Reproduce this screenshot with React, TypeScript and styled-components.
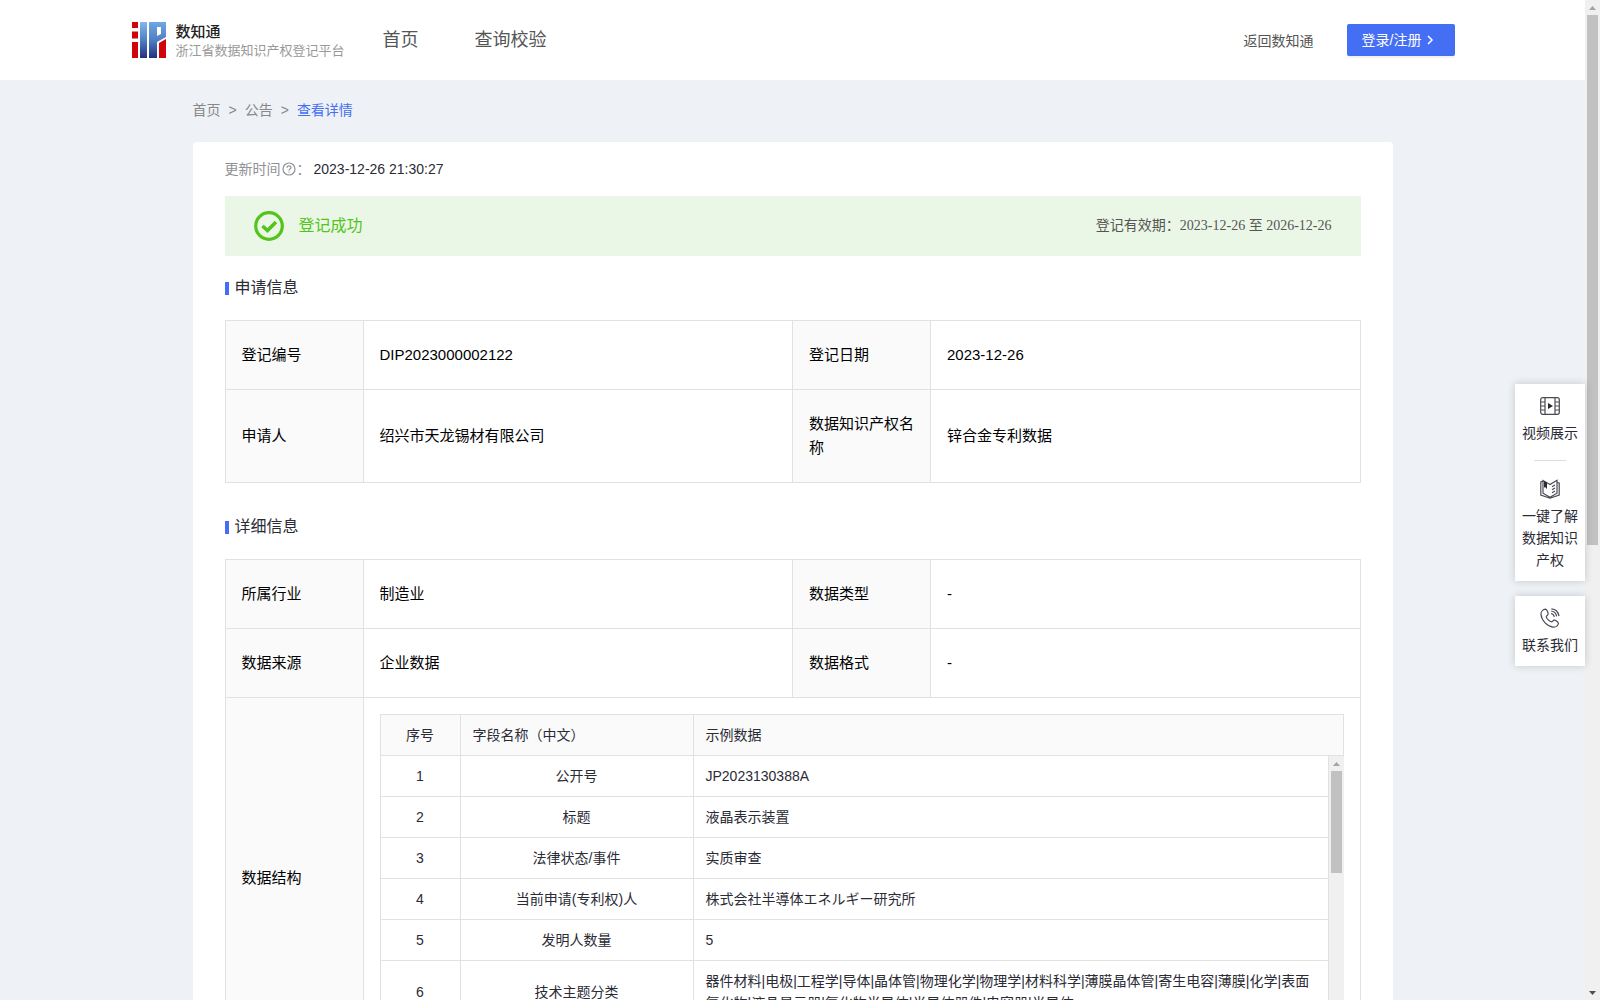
import React from "react";
import styled, { createGlobalStyle, css } from "styled-components";

const sans = `"Liberation Sans", "Noto Sans CJK SC", sans-serif`;
const cjk = `"Noto Sans CJK SC", "Liberation Sans", sans-serif`;
const line = "#e1e1e1";
const blue = "#446ef4";

const GlobalStyle = createGlobalStyle`
  * { box-sizing: border-box; }
  body { margin: 0; background: #eef2f6; font-family: ${sans}; font-size: 14px; color: #2b2b36; }
  a { color: inherit; text-decoration: none; }
  h1, h2, p { margin: 0; font-weight: 400; }
`;

const Page = styled.div`
  display: flex;
  height: 100vh;
  overflow: hidden;
  position: relative;
`;
const Content = styled.div`
  flex: 1;
  min-width: 0;
  overflow: hidden;
`;

/* scroll bars */
const Track = styled.div`
  display: flex;
  flex-direction: column;
  align-items: center;
  justify-content: space-between;
  flex: none;
  width: 15px;
  background: #f0f0f0;
`;
const ThumbArea = styled.div`
  flex: 1;
  width: 11px;
`;
const Thumb = styled.div<{ $size: string }>`
  height: ${(p) => p.$size};
  background: #c1c1c1;
`;
const ArrowBox = styled.svg`
  display: block;
  width: 15px;
  height: 15px;
`;
function Scrollbar({ size }: { size: string }) {
  return (
    <Track aria-hidden="true">
      <ArrowBox viewBox="0 0 15 15"><path d="M4 10h7L7.500 6z" fill="#a3a3a3" /></ArrowBox>
      <ThumbArea><Thumb $size={size} /></ThumbArea>
      <ArrowBox viewBox="0 0 15 15"><path d="M4 6h7l-3.500 4z" fill="#505050" /></ArrowBox>
    </Track>
  );
}

/* header */
const Header = styled.header`
  background: #fff;
`;
const HeaderInner = styled.div`
  display: flex;
  align-items: center;
  max-width: 1324px;
  height: 80px;
  margin: 0 auto;
`;
const Brand = styled.a`
  display: flex;
  align-items: center;
  gap: 10px;
`;
const BrandName = styled.strong`
  display: block;
  font: 500 15px/20px ${cjk};
  color: #222;
`;
const BrandSub = styled.span`
  display: block;
  font: 400 13px/18px ${cjk};
  color: #999;
`;
const Nav = styled.nav`
  display: flex;
  gap: 56px;
  margin-left: 38px;
  flex: 1;
  font-size: 18px;
  line-height: 24px;
  color: #555;
`;
const BackLink = styled.a`
  color: #555;
  margin-right: 33px;
`;
const LoginButton = styled.button`
  display: flex;
  align-items: center;
  gap: 5px;
  height: 32px;
  width: 108px;
  padding: 0 15px;
  border: 0;
  border-radius: 2px;
  background: ${blue};
  box-shadow: 0 2px 0 rgba(0, 0, 0, 0.05);
  color: #fff;
  font: 14px/20px ${sans};
`;

/* main card */
const Main = styled.main`
  max-width: 1200px;
  margin: 0 auto;
`;
const Breadcrumb = styled.nav`
  display: flex;
  gap: 8px;
  padding: 20px 0 22px;
  line-height: 20px;
  color: #888;
`;
const Current = styled.span`
  color: ${blue};
`;
const Card = styled.section`
  background: #fff;
  border-radius: 4px;
  padding: 16px 32px;
`;
const Updated = styled.p`
  display: flex;
  align-items: center;
  height: 22px;
  line-height: 22px;
`;
const UpdatedLabel = styled.span`
  display: flex;
  align-items: center;
  gap: 1px;
  margin-right: 3px;
  color: #909096;
`;
const Banner = styled.div`
  display: flex;
  align-items: center;
  gap: 15px;
  height: 60px;
  margin-top: 16px;
  padding: 0 29px;
  background: #ebf7e6;
`;
const BannerTitle = styled.h1`
  flex: 1;
  font-size: 16px;
  line-height: 24px;
  color: #52c41a;
`;
const Validity = styled.p`
  font: 14px/22px "Liberation Serif", "Noto Sans CJK SC", serif;
  color: #555;
`;
const SectionTitle = styled.h2<{ $top: number }>`
  display: flex;
  align-items: center;
  gap: 6px;
  margin: ${(p) => p.$top}px 0 20px;
  font-size: 16px;
  line-height: 24px;
  &::before {
    content: "";
    width: 4px;
    height: 13px;
    background: ${blue};
  }
`;

/* key and value table */
const InfoTable = styled.table`
  width: 100%;
  table-layout: fixed;
  border-collapse: collapse;
  font-size: 15px;
  line-height: 24px;
  color: #000;
`;
const Label = styled.th`
  width: 138px;
  padding: 22px 15px 22px 16px;
  border: 1px solid ${line};
  background: #fafafa;
  font-weight: 400;
  text-align: left;
`;
const Value = styled.td<{ $nested?: boolean }>`
  padding: ${(p) => (p.$nested ? "16px" : "22px 16px")};
  border: 1px solid ${line};
`;

/* nested data table */
const Grid = styled.table`
  width: 100%;
  table-layout: fixed;
  border-collapse: collapse;
  font-size: 14px;
  line-height: 22px;
  color: #2b2b36;
`;
const cell = css<{ $center?: boolean }>`
  padding: 9px 12px;
  border: 1px solid ${line};
  font-weight: 400;
  text-align: ${(p) => (p.$center ? "center" : "left")};
`;
const HeadCell = styled.th<{ $center?: boolean }>`
  ${cell}
  background: #fafafa;
`;
const Cell = styled.td<{ $center?: boolean }>`
  ${cell}
`;
const FirstRow = styled.tbody`
  tr:first-child td { border-top: 0; }
`;
const GridBody = styled.div`
  display: flex;
  height: 286px;
  overflow: hidden;
`;
const GridRows = styled.div`
  flex: 1;
  min-width: 0;
`;

/* floating side bar */
const Side = styled.aside`
  position: absolute;
  right: 15px;
  top: 384px;
  width: 70px;
  display: flex;
  flex-direction: column;
  gap: 15px;
`;
const SideCard = styled.div`
  padding: 12px 7px 10px;
  background: #fff;
  box-shadow: 0 0 8px rgba(0, 0, 0, 0.18);
`;
const SideLink = styled.a`
  display: flex;
  flex-direction: column;
  align-items: center;
  gap: 6px;
  font-size: 14px;
  line-height: 22px;
  text-align: center;
  color: #2b2b36;
`;
const Divider = styled.hr`
  width: 32px;
  height: 1px;
  margin: 16px auto 18px;
  border: 0;
  background: #ddd;
`;

function Logo() {
  return (
    <svg width="35" height="36" viewBox="0 0 35 36" aria-hidden="true">
      <defs>
        <linearGradient id="logoBlue" x1="0" y1="0" x2="0" y2="1">
          <stop offset="0" stopColor="#86b6ea" />
          <stop offset="0.5" stopColor="#4f80c4" />
          <stop offset="1" stopColor="#25307f" />
        </linearGradient>
        <linearGradient id="logoBlueP" gradientUnits="userSpaceOnUse" x1="0" y1="0" x2="0" y2="36">
          <stop offset="0" stopColor="#6fa6e4" />
          <stop offset="0.5" stopColor="#4f80c4" />
          <stop offset="1" stopColor="#25307f" />
        </linearGradient>
      </defs>
      <path d="M1 0h6v6H1zM1 9.500h6v7H1zM1 20h6v16H1z" fill="#d0050c" />
      <path d="M9 0h7v36H9z" fill="url(#logoBlue)" />
      <path d="M18 0h17v15l-9 5v16h-8zM26 5v9l4-2V5z" fill="url(#logoBlueP)" fillRule="evenodd" />
      <path d="M28 21l7-4v19h-7z" fill="#d0050c" />
    </svg>
  );
}
function Chevron() {
  return (
    <svg width="8" height="10" viewBox="0 0 8 10" fill="none" stroke="#fff" strokeWidth="1.500" aria-hidden="true">
      <path d="M2 1l4 4-4 4" />
    </svg>
  );
}
function Question() {
  return (
    <svg width="14" height="14" viewBox="0 0 14 14" fill="none" stroke="#909096" strokeWidth="1.200" aria-hidden="true">
      <circle cx="7" cy="7" r="6" />
      <path d="M5 5.700C5 3.200 9 3.200 9 5.600 9 7 7 6.900 7 8.400M7 9.500v1.100" />
    </svg>
  );
}
function Success() {
  return (
    <svg width="30" height="30" viewBox="0 0 30 30" fill="none" stroke="#52c41a" aria-hidden="true">
      <circle cx="15" cy="15" r="13.300" strokeWidth="3.200" />
      <path d="M8.500 15l5 4.500 8.500-8.500" strokeWidth="3.600" />
    </svg>
  );
}
const iconProps = {
  width: 20,
  height: 20,
  viewBox: "0 0 20 20",
  fill: "none",
  stroke: "#4a4a52",
  strokeWidth: 1.2,
  "aria-hidden": true,
} as const;
function Film() {
  return (
    <svg {...iconProps}>
      <rect x="0.700" y="1.700" width="18.600" height="16.600" rx="2" />
      <path d="M5 2v16M15 2v16M1 6h4M1 10h4M1 14h4M15 6h4M15 10h4M15 14h4" />
      <path d="M8 7l5 3-5 3z" fill="#2b2b36" stroke="none" />
    </svg>
  );
}
function Book() {
  return (
    <svg {...iconProps}>
      <path d="M3 2L.8 3v13l9.200 3.200 9.200-3.200V4L17 3.500M10 5.500L3 1.500v12.700l7 4 7-4V1.300l-7 4.200zM12 7.800l3-1.700M12 10.800l3-1.700M12 13.800l3-1.700" />
      <path d="M4 2l3 1.800v6.400L5.500 8.300 4 8.500z" fill="#2b2b36" stroke="none" />
    </svg>
  );
}
function Phone() {
  return (
    <svg {...iconProps}>
      <path d="M5.500 1.200C3 1.500.8 3.500 1 6.500c.5 6 6.500 12 12 12.600 3 .2 5-1.600 5.400-3.600.1-1.400-3-3.500-4.400-3.300-1 .2-1.500 1.600-2.500 1.700C9.800 13.800 6.300 10.300 6.200 8.800c.1-1 1.500-1.500 1.800-2.500.3-1.500-1-5-2.500-5.100z" />
      <path d="M11 5.500c1.700.3 3 1.700 3.300 3.400M11.200 3c3 .4 5 2.500 5.400 5.400M11.400.8c4.200.3 7 3.300 7.600 7.300" />
    </svg>
  );
}

const rows: [string, string][] = [
  ["公开号", "JP2023130388A"],
  ["标题", "液晶表示装置"],
  ["法律状态/事件", "实质审查"],
  ["当前申请(专利权)人", "株式会社半導体エネルギー研究所"],
  ["发明人数量", "5"],
  [
    "技术主题分类",
    "器件材料|电极|工程学|导体|晶体管|物理化学|物理学|材料科学|薄膜晶体管|寄生电容|薄膜|化学|表面氧化物|液晶显示器|氧化物半导体|半导体器件|电容器|半导体",
  ],
];

const Columns = () => (
  <colgroup>
    <col style={{ width: 80 }} />
    <col style={{ width: 233 }} />
    <col />
  </colgroup>
);

function InfoRow({ items }: { items: [string, string][] }) {
  return (
    <tr>
      {items.map(([label, value]) => (
        <React.Fragment key={label}>
          <Label scope="row">{label}</Label>
          <Value>{value}</Value>
        </React.Fragment>
      ))}
    </tr>
  );
}
const InfoColumns = () => (
  <colgroup>
    <col style={{ width: 138 }} />
    <col />
    <col style={{ width: 138 }} />
    <col />
  </colgroup>
);

export default function App() {
  return (
    <Page>
      <GlobalStyle />
      <Content>
        <Header>
          <HeaderInner>
            <Brand href="#">
              <Logo />
              <span>
                <BrandName>数知通</BrandName>
                <BrandSub>浙江省数据知识产权登记平台</BrandSub>
              </span>
            </Brand>
            <Nav>
              <a href="#">首页</a>
              <a href="#">查询校验</a>
            </Nav>
            <BackLink href="#">返回数知通</BackLink>
            <LoginButton type="button">
              登录/注册
              <Chevron />
            </LoginButton>
          </HeaderInner>
        </Header>
        <Main>
          <Breadcrumb>
            <a href="#">首页</a>
            <span>&gt;</span>
            <a href="#">公告</a>
            <span>&gt;</span>
            <Current>查看详情</Current>
          </Breadcrumb>
          <Card>
            <Updated>
              <UpdatedLabel>
                更新时间
                <Question />
                ：
              </UpdatedLabel>
              2023-12-26 21:30:27
            </Updated>
            <Banner>
              <Success />
              <BannerTitle>登记成功</BannerTitle>
              <Validity>登记有效期：2023-12-26 至 2026-12-26</Validity>
            </Banner>
            <SectionTitle $top={20}>申请信息</SectionTitle>
            <InfoTable>
              <InfoColumns />
              <tbody>
                <InfoRow items={[["登记编号", "DIP2023000002122"], ["登记日期", "2023-12-26"]]} />
                <InfoRow items={[["申请人", "绍兴市天龙锡材有限公司"], ["数据知识产权名称", "锌合金专利数据"]]} />
              </tbody>
            </InfoTable>
            <SectionTitle $top={32}>详细信息</SectionTitle>
            <InfoTable>
              <InfoColumns />
              <tbody>
                <InfoRow items={[["所属行业", "制造业"], ["数据类型", "-"]]} />
                <InfoRow items={[["数据来源", "企业数据"], ["数据格式", "-"]]} />
                <tr>
                  <Label scope="row">数据结构</Label>
                  <Value colSpan={3} $nested>
                    <Grid>
                      <Columns />
                      <thead>
                        <tr>
                          <HeadCell $center>序号</HeadCell>
                          <HeadCell>字段名称（中文）</HeadCell>
                          <HeadCell>示例数据</HeadCell>
                        </tr>
                      </thead>
                    </Grid>
                    <GridBody>
                      <GridRows>
                        <Grid>
                          <Columns />
                          <FirstRow>
                            {rows.map(([name, sample], i) => (
                              <tr key={name}>
                                <Cell $center>{i + 1}</Cell>
                                <Cell $center>{name}</Cell>
                                <Cell>{sample}</Cell>
                              </tr>
                            ))}
                          </FirstRow>
                        </Grid>
                      </GridRows>
                      <Scrollbar size="40%" />
                    </GridBody>
                  </Value>
                </tr>
              </tbody>
            </InfoTable>
          </Card>
        </Main>
      </Content>
      <Scrollbar size="54.6%" />
      <Side>
        <SideCard>
          <SideLink href="#">
            <Film />
            视频展示
          </SideLink>
          <Divider />
          <SideLink href="#">
            <Book />
            一键了解数据知识产权
          </SideLink>
        </SideCard>
        <SideCard>
          <SideLink href="#">
            <Phone />
            联系我们
          </SideLink>
        </SideCard>
      </Side>
    </Page>
  );
}
